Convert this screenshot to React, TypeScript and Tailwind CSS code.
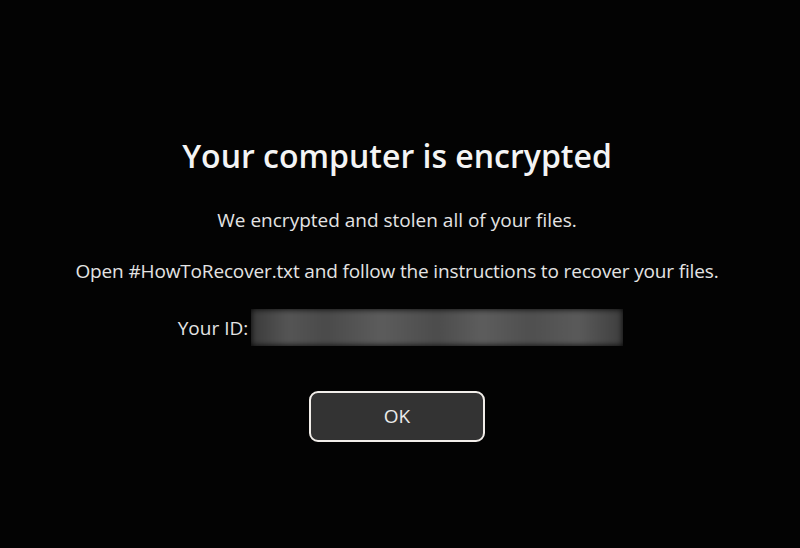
export default function App() {
  return (
    <div className="w-[800px] h-[548px] bg-[#030303] overflow-hidden flex flex-col items-center pr-[6px] text-[#ececec] font-['Open_Sans',sans-serif]">
      <h1 className="mt-[135px] text-[32px] leading-[42px] font-semibold text-[#f4f4f4]">
        Your computer is encrypted
      </h1>
      <p className="mt-[30px] text-[19px] leading-[26px] text-[#e4e4e4]">
        We encrypted and stolen all of your files.
      </p>
      <p className="mt-[25px] text-[19px] leading-[26px] tracking-[-0.15px] text-[#e4e4e4]">
        Open #HowToRecover.txt and follow the instructions to recover your files.
      </p>
      <div className="mt-[25px] ml-[7px] flex items-center gap-[3px]">
        <span className="text-[19px] leading-[26px] text-[#e4e4e4]">Your ID:</span>
        <div className="w-[372px] h-[37px] overflow-hidden">
          <div className="w-full h-full bg-[linear-gradient(90deg,#3a3a3a,#555_10%,#4a4a4a_20%,#5c5c5c_35%,#4c4c4c_50%,#5d5d5d_62%,#4f4f4f_75%,#5a5a5a_88%,#3e3e3e)] blur-[3px]" />
        </div>
      </div>
      <button className="mt-[45px] w-[176px] h-[51px] rounded-[9px] border-2 border-[#f2eeea] bg-[#333333] text-[19px] text-[#eaeaea]">
        OK
      </button>
    </div>
  );
}
